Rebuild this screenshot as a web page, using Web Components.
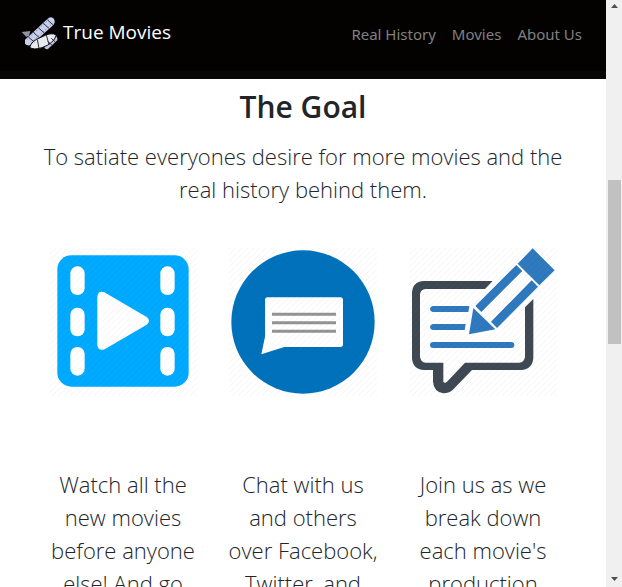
<!DOCTYPE html>
<html lang="en">
<head>
<meta charset="utf-8">
<title>True Movies</title>
<style>
body { margin: 0; background: #fff; color: #212529; font-family: "Open Sans", "Noto Sans", sans-serif; }
</style>
</head>
<body>
<page-view>
  <site-header slot="header" brand="True Movies">
    <nav-link href="#history">Real History</nav-link>
    <nav-link href="#movies">Movies</nav-link>
    <nav-link href="#about">About Us</nav-link>
  </site-header>
  <goal-section heading="The Goal">
    <span slot="lead">To satiate everyones desire for more movies and the real history behind them.</span>
    <feature-card icon="film">Watch all the new movies before anyone else! And go</feature-card>
    <feature-card icon="chat">Chat with us and others over Facebook, Twitter, and</feature-card>
    <feature-card icon="write">Join us as we break down each movie's production</feature-card>
  </goal-section>
</page-view>
<script>
class BaseElement extends HTMLElement {
  render(html) {
    const t = document.createElement('template');
    t.innerHTML = html;
    this.attachShadow({ mode: 'open' }).append(t.content.cloneNode(true));
  }
}

customElements.define('page-view', class extends BaseElement {
  connectedCallback() {
    this.render(`
      <style>
        :host { display: grid; grid-template-columns: minmax(0, 1fr) auto; height: 100vh; overflow: hidden; }
        .content { overflow: hidden; }
      </style>
      <div class="content"><slot name="header"></slot><main><slot></slot></main></div>
      <scroll-rail></scroll-rail>`);
  }
});

customElements.define('scroll-rail', class extends BaseElement {
  connectedCallback() {
    this.render(`
      <style>
        :host { display: grid; grid-template-rows: 16px 164fr 164fr 227fr 16px; width: 16px; background: #f0f0f0; }
        svg { display: block; width: 16px; height: 16px; fill: #505050; }
        .thumb { grid-row: 3; margin: 0 1px 0 2px; background: #c1c1c1; }
        .down { grid-row: 5; }
      </style>
      <svg viewBox="0 0 16 16" aria-hidden="true"><path d="M5 8L8.500 4L12 8z"/></svg>
      <div class="thumb"></div>
      <svg class="down" viewBox="0 0 16 16" aria-hidden="true"><path d="M5 6h7L8.500 10z"/></svg>`);
  }
});

customElements.define('site-header', class extends BaseElement {
  connectedCallback() {
    this.render(`
      <style>
        :host { display: block; background: #030201; border-bottom: 8px solid #080705; }
        header { display: flex; align-items: center; justify-content: space-between; min-height: 71px; padding: 0 24px 4px 20px; box-sizing: border-box; }
        .brand { display: flex; align-items: center; gap: 3px; color: #fff; font-size: 19px; line-height: 28px; text-decoration: none; white-space: nowrap; }
        .brand span { padding-bottom: 4px; }
        .logo { width: 40px; height: 40px; }
        nav { display: flex; gap: 16px; }
      </style>
      <header>
        <a class="brand" href="#top">
          <svg class="logo" viewBox="15 15 120 120" aria-hidden="true">
            <path fill="#8f94a3" d="M20 69L46 66L42 80L34 84z"/>
            <path fill="#c9d0ec" d="M30 92L98 29Q110 20 117 30Q122 40 115 48L48 108Q36 112 30 104z"/>
            <path fill="#bcc6e6" d="M88 108L114 82Q129 78 127 94L98 121Q86 121 88 108z"/>
            <path fill="#e9ebee" stroke="#0b0b0f" stroke-width="3" d="M44 115Q50 94 80 84Q108 68 124 78Q117 103 81 116Q55 124 44 115z"/>
            <path fill="none" stroke="#2b2e3a" stroke-width="3" d="M40 84L58 99M55 70L73 86M70 56L88 72M85 43L102 58M97 32L113 47M67 91L72 118M94 78L102 107M99 97L111 109M109 88L120 98"/>
            <path fill="none" stroke="#5c6072" stroke-width="2" stroke-dasharray="3 4" d="M37 90L103 30M48 101L113 43"/>
          </svg>
          <span>${this.getAttribute('brand')}</span>
        </a>
        <nav aria-label="Main"><slot></slot></nav>
      </header>`);
  }
});

customElements.define('nav-link', class extends BaseElement {
  connectedCallback() {
    this.render(`
      <style>
        :host { display: block; }
        a { color: #81807f; font-family: "Noto Sans", "Open Sans", sans-serif; font-size: 15px; line-height: 24px; text-decoration: none; white-space: nowrap; }
      </style>
      <a href="${this.getAttribute('href')}"><slot></slot></a>`);
  }
});

customElements.define('goal-section', class extends BaseElement {
  connectedCallback() {
    this.render(`
      <style>
        :host { display: block; padding: 8px 40px 0; text-align: center; }
        h2 { margin: 0 0 13px; font-size: 30px; line-height: 40px; font-weight: 600; }
        p { margin: 0; font-size: 22px; line-height: 33px; font-weight: 300; }
        .cards { display: grid; grid-template-columns: repeat(3, minmax(0, 1fr)); gap: 24px; margin: 42px 5px 0; }
      </style>
      <h2>${this.getAttribute('heading')}</h2>
      <p><slot name="lead"></slot></p>
      <div class="cards"><slot></slot></div>`);
  }
});

const icons = {
  film: `
    <rect x="52" y="46" width="394" height="394" rx="42" fill="#00aaff"/>
    <g fill="#fff">
      <rect x="91" y="79" width="43" height="86" rx="21"/><rect x="91" y="203" width="43" height="86" rx="21"/><rect x="91" y="321" width="43" height="86" rx="21"/>
      <rect x="361" y="79" width="43" height="86" rx="21"/><rect x="361" y="203" width="43" height="86" rx="21"/><rect x="361" y="321" width="43" height="86" rx="21"/>
      <path d="M172 170Q174 151 193 157L320 231Q334 242 320 254L194 328Q175 334 172 316z"/>
    </g>`,
  chat: `
    <circle cx="249" cy="246" r="215" fill="#0072bc"/>
    <path fill="#fff" d="M143 172H361Q369 172 369 180V313Q369 321 361 321H193L124 343L135 290V180Q135 172 143 172z"/>
    <path stroke="#939393" stroke-width="9" d="M156 223H348M156 248H348M156 274H348"/>`,
  write: `
    <path fill="#3e4954" d="M278 123H72Q36 125 36 161V354Q38 388 72 390H99V425Q101 455 130 460Q146 460 158 450L216 390H363Q398 387 400 353V177L375 202V350Q373 366 358 368H195L141 425Q135 431 130 426V368H77Q62 366 60 350V163Q62 148 77 147H255z"/>
    <g fill="#2f79be">
      <path d="M98 198H208L205 216H98Q90 214 90 207T98 198zM98 252H197L194 270H98Q90 268 90 261T98 252z"/>
      <rect x="90" y="306" width="253" height="18" rx="9"/>
      <path d="M398 25L464 91L418 136L353 71zM349 75L367 93L244 216L226 198zM395 121L414 140L291 264L273 245zM220 204L286 268L207 283z"/>
    </g>`
};

customElements.define('feature-card', class extends BaseElement {
  connectedCallback() {
    this.render(`
      <style>
        :host { display: block; font-size: 22px; line-height: 33px; font-weight: 300; }
        .picture { padding: 0 4px; margin-bottom: 72px; }
        svg { display: block; width: 100%; height: auto; }
        p { margin: 0; }
      </style>
      <div class="picture"><svg viewBox="27 24 444 444" aria-hidden="true">
        <defs><pattern id="hatch" width="18" height="18" patternUnits="userSpaceOnUse">
          <path d="M-3 3L3 -3M-3 21L21 -3M15 21L21 15" stroke="#000" stroke-opacity=".04" stroke-width="3"/>
        </pattern></defs>
        ${icons[this.getAttribute('icon')]}
        <rect x="27" y="24" width="444" height="444" fill="url(#hatch)"/>
      </svg></div>
      <p><slot></slot></p>`);
  }
});
</script>
</body>
</html>
